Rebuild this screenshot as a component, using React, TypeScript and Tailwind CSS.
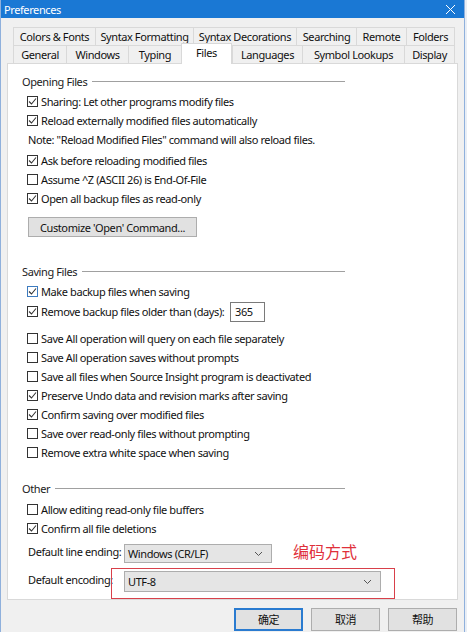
import { ReactNode } from "react"

const row1 = [
  { label: "Colors & Fonts", w: "w-[82px]" },
  { label: "Syntax Formatting", w: "w-[98px]" },
  { label: "Syntax Decorations", w: "w-[103px]" },
  { label: "Searching", w: "w-[60px]" },
  { label: "Remote", w: "w-[50px]" },
  { label: "Folders", w: "w-[49px]" },
]

const row2 = [
  { label: "General", w: "w-[53px]" },
  { label: "Windows", w: "w-[62px]" },
  { label: "Typing", w: "w-[53px]" },
  { label: "Files", w: "w-[51px]", active: true },
  { label: "Languages", w: "w-[70px]" },
  { label: "Symbol Lookups", w: "w-[102px]" },
  { label: "Display", w: "w-[51px]" },
]

function Check({ checked, hover }: { checked?: boolean; hover?: boolean }) {
  return (
    <span
      className={`w-[11px] h-[11px] shrink-0 border bg-white flex items-center justify-center ${
        hover ? "border-[#3d7bbf]" : "border-[#333]"
      }`}
    >
      {checked && (
        <svg width="9" height="9" viewBox="0 0 9 9">
          <polyline points="1,4.5 3.5,7 8,1.5" fill="none" stroke="#333" strokeWidth="1.1" />
        </svg>
      )}
    </span>
  )
}

function Row({ checked, hover, children, className = "" }: { checked?: boolean; hover?: boolean; children: ReactNode; className?: string }) {
  return (
    <div className={`h-[19px] flex items-center pl-[19px] ${className}`}>
      <Check checked={checked} hover={hover} />
      <span className="ml-[3px] whitespace-nowrap">{children}</span>
    </div>
  )
}

function Heading({ children, className = "" }: { children: ReactNode; className?: string }) {
  return (
    <div className={`h-[16px] w-[323px] flex items-center ${className}`}>
      <span className="text-[#222] whitespace-nowrap">{children}</span>
      <span className="flex-1 ml-[5px] h-px bg-[#a0a0a0]" />
    </div>
  )
}

function Chevron() {
  return (
    <svg width="9" height="6" viewBox="0 0 9 6" className="shrink-0">
      <polyline points="1,1 4.5,4.5 8,1" fill="none" stroke="#555" strokeWidth="1" />
    </svg>
  )
}

function Select({ value, w, h }: { value: string; w: string; h: string }) {
  return (
    <div className={`${w} ${h} bg-[#e5e5e5] border border-[#adadad] flex items-center justify-between pl-[3px] pr-[8px]`}>
      <span>{value}</span>
      <Chevron />
    </div>
  )
}

function DlgButton({ children, primary }: { children: ReactNode; primary?: boolean }) {
  return (
    <div
      className={`w-[69px] h-[23px] bg-[#e1e1e1] flex items-center justify-center ${
        primary ? "border-2 border-[#2a7bd0]" : "border border-[#adadad]"
      }`}
    >
      {children}
    </div>
  )
}

export default function App() {
  return (
    <div
      className="w-[467px] h-[632px] overflow-hidden bg-[#e9eef5] text-[11px] tracking-[-0.4px] text-[#111] leading-none"
      style={{ fontFamily: '"Noto Sans", "Noto Sans CJK SC", sans-serif' }}
    >
      <div className="w-[465px] h-[632px] bg-[#f0f0f0] border-x border-[#8fb0dc] flex flex-col">
        {/* Title bar */}
        <div className="h-[18px] bg-[#1a78d4] flex items-center justify-between pl-[3px] pr-[8px] text-white">
          <span>Preferences</span>
          <svg width="11" height="11" viewBox="0 0 11 11">
            <path d="M1 1 L10 10 M10 1 L1 10" stroke="#fff" strokeWidth="1" />
          </svg>
        </div>

        <div className="px-[6px] pt-[9px]">
          {/* Tabs */}
          <div className="ml-[6px] flex flex-col relative z-10">
            <div className="flex h-[18px]">
              {row1.map((t) => (
                <div key={t.label} className={`${t.w} h-[18px] border-t border-l last:border-r border-[#d9d9d9] flex items-center justify-center whitespace-nowrap`}>
                  {t.label}
                </div>
              ))}
            </div>
            <div className="flex h-[18px] items-end">
              {row2.map((t) =>
                t.active ? (
                  <div key={t.label} className={`${t.w} h-[21px] -mb-px bg-white border-t border-x border-[#d9d9d9] flex items-start pt-[3px] justify-center`}>
                    {t.label}
                  </div>
                ) : (
                  <div key={t.label} className={`${t.w} h-[18px] border-t border-l last:border-r border-[#d9d9d9] flex items-center justify-center whitespace-nowrap`}>
                    {t.label}
                  </div>
                )
              )}
            </div>
          </div>

          {/* Panel */}
          <div className="relative h-[537px] bg-white border border-[#d9d9d9] pl-[14px]">
            <Heading className="mt-[9px]">Opening Files</Heading>
            <div className="-ml-[14px]">
              <Row checked className="mt-[3px]">Sharing: Let other programs modify files</Row>
              <Row checked>Reload externally modified files automatically</Row>
              <div className="h-[19px] flex items-center pl-[20px]">Note: "Reload Modified Files" command will also reload files.</div>
              <Row checked className="mt-[2px]">Ask before reloading modified files</Row>
              <Row>Assume ^Z (ASCII 26) is End-Of-File</Row>
              <Row checked>Open all backup files as read-only</Row>
              <div className="ml-[20px] mt-[9px] w-[169px] h-[20px] bg-[#e1e1e1] border border-[#adadad] flex items-center justify-center">
                Customize 'Open' Command...
              </div>
            </div>

            <Heading className="mt-[26px]">Saving Files</Heading>
            <div className="-ml-[14px]">
              <Row checked hover className="mt-[3px]">Make backup files when saving</Row>
              <div className="h-[21px] flex items-center pl-[19px]">
                <Check checked />
                <span className="ml-[3px] w-[189px] whitespace-nowrap">Remove backup files older than (days):</span>
                <div className="w-[35px] h-[20px] bg-white border border-[#7a7a7a] flex items-center pl-[4px]">365</div>
              </div>
              <Row className="mt-[7px]">Save All operation will query on each file separately</Row>
              <Row>Save All operation saves without prompts</Row>
              <Row>Save all files when Source Insight program is deactivated</Row>
              <Row checked>Preserve Undo data and revision marks after saving</Row>
              <Row checked>Confirm saving over modified files</Row>
              <Row>Save over read-only files without prompting</Row>
              <Row>Remove extra white space when saving</Row>
            </div>

            <Heading className="mt-[18px]">Other</Heading>
            <div className="-ml-[14px]">
              <Row className="mt-[4px]">Allow editing read-only file buffers</Row>
              <Row checked>Confirm all file deletions</Row>
              <div className="mt-[6px] flex items-center pl-[20px]">
                <span className="w-[96px] pb-[4px] whitespace-nowrap">Default line ending:</span>
                <Select value="Windows (CR/LF)" w="w-[148px]" h="h-[19px]" />
              </div>
              <div className="mt-[8px] flex items-center pl-[20px]">
                <span className="w-[96px] pb-[4px] whitespace-nowrap">Default encoding:</span>
                <Select value="UTF-8" w="w-[257px]" h="h-[21px]" />
              </div>
            </div>

            {/* annotation */}
            <div className="absolute left-[103px] top-[504px] w-[284px] h-[31px] border border-[#d8404a]" />
            <div
              className="absolute left-[285px] top-[479px] text-[16px] tracking-normal text-[#e0303a]"
              style={{ fontFamily: '"Noto Sans CJK SC", sans-serif' }}
            >
              编码方式
            </div>
          </div>

          {/* Dialog buttons */}
          <div className="mt-[8px] flex justify-end gap-[8px] pr-[1px]">
            <DlgButton primary>确定</DlgButton>
            <DlgButton>取消</DlgButton>
            <DlgButton>帮助</DlgButton>
          </div>
        </div>
      </div>
    </div>
  )
}
